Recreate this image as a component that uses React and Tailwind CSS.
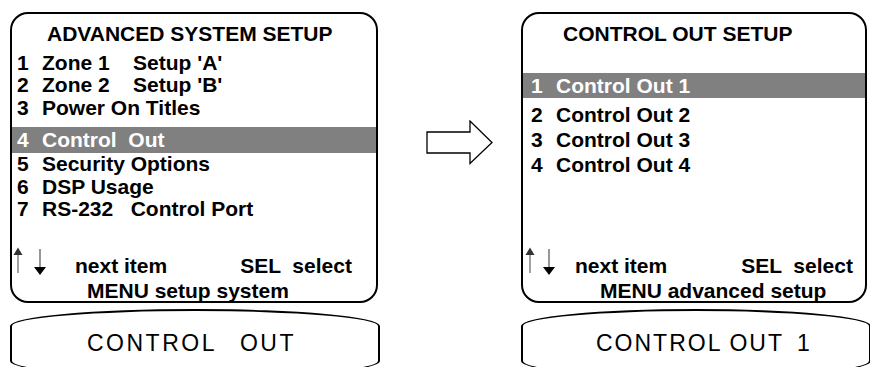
import React from "react";

function Arrows({ upX, downX }) {
  return (
    <svg width="40" height="30" viewBox="0 0 40 30" className="shrink-0 block">
      <line x1={upX} y1="6" x2={upX} y2="26" stroke="#7a7a7a" strokeWidth="1.4" />
      <path d={`M${upX - 4.5} 8 L${upX} 0.5 L${upX + 4.5} 8 Z`} fill="#333" />
      <line x1={downX} y1="2" x2={downX} y2="21" stroke="#6a6a6a" strokeWidth="1.4" />
      <path d={`M${downX - 6} 20 L${downX} 28 L${downX + 6} 20 Z`} fill="#000" />
    </svg>
  );
}

function Row({ n, children, numW }) {
  return (
    <div className="flex">
      <span className={numW}>{n}</span>
      <span className="whitespace-pre">{children}</span>
    </div>
  );
}

export default function App() {
  return (
    <div className="w-[870px] h-[367px] overflow-hidden bg-white text-black font-['Liberation_Sans',Arial,sans-serif]">
      <div className="flex pl-[10px] pt-[12px]">
        {/* LEFT COLUMN */}
        <div className="w-[370px] flex flex-col">
          <div className="w-[368px] h-[291px] border-2 border-black rounded-[18px] flex flex-col font-bold text-[21px] leading-[22.5px]">
            <div className="pt-[9px] pl-[35px]">ADVANCED SYSTEM SETUP</div>
            <div className="mt-[6px] pl-[5px]">
              <Row n="1" numW="w-[25px]">{"Zone 1    Setup 'A'"}</Row>
              <Row n="2" numW="w-[25px]">{"Zone 2    Setup 'B'"}</Row>
              <Row n="3" numW="w-[25px]">Power On Titles</Row>
            </div>
            <div className="mt-[8px] h-[26px] leading-[26px] bg-[#808080] text-white pl-[5px]">
              <Row n="4" numW="w-[25px]">{"Control  Out"}</Row>
            </div>
            <div className="pl-[5px]">
              <Row n="5" numW="w-[25px]">Security Options</Row>
              <Row n="6" numW="w-[25px]">DSP Usage</Row>
              <Row n="7" numW="w-[25px]">{"RS-232   Control Port"}</Row>
            </div>
            <div className="mt-auto flex items-end">
              <Arrows upX={6} downX={28} />
              <span className="ml-[23px]">next item</span>
              <span className="ml-[73px] whitespace-pre">{"SEL  select"}</span>
            </div>
            <div className="mt-[2.5px] -mb-[1px] pl-[75px]">MENU setup system</div>
          </div>
          <div className="mt-[6px] w-[370px] h-[69px] border-2 border-black rounded-[50%/17px] pt-[21px] pl-[75px] text-[23px] leading-[23px] tracking-[2.5px] flex">
            <span>CONTROL</span>
            <span className="ml-[23px]">OUT</span>
          </div>
        </div>

        {/* MIDDLE ARROW */}
        <div className="w-[141px] pl-[46px] pt-[108px]">
          <svg width="68" height="46" viewBox="0 0 68 46" className="block">
            <path d="M1 12 H44 V1 L66 22.5 L44 43.5 V33 H1 Z" fill="#fff" stroke="#000" strokeWidth="1.3" strokeLinejoin="miter" />
          </svg>
        </div>

        {/* RIGHT COLUMN */}
        <div className="w-[349px] flex flex-col">
          <div className="w-[346px] h-[291px] border-2 border-black rounded-[18px] flex flex-col font-bold text-[21px] leading-[22.5px]">
            <div className="pt-[9px] pl-[40px]">CONTROL OUT SETUP</div>
            <div className="mt-[27.5px] h-[25px] leading-[25px] bg-[#808080] text-white pl-[8px]">
              <Row n="1" numW="w-[25px]">Control Out 1</Row>
            </div>
            <div className="mt-[4px] pl-[8px] leading-[25px]">
              <Row n="2" numW="w-[25px]">Control Out 2</Row>
              <Row n="3" numW="w-[25px]">Control Out 3</Row>
              <Row n="4" numW="w-[25px]">Control Out 4</Row>
            </div>
            <div className="mt-auto flex items-end">
              <Arrows upX={7} downX={26} />
              <span className="ml-[12px]">next item</span>
              <span className="ml-[74px] whitespace-pre">{"SEL  select"}</span>
            </div>
            <div className="mt-[2.5px] -mb-[1px] pl-[77px]">MENU advanced setup</div>
          </div>
          <div className="mt-[6px] w-[350px] h-[69px] border-2 border-black rounded-[50%/17px] pt-[21px] pl-[73px] text-[23px] leading-[23px] tracking-[2px] flex">
            <span>CONTROL</span>
            <span className="ml-[7px]">OUT</span>
            <span className="ml-[13px]">1</span>
          </div>
        </div>
      </div>
    </div>
  );
}
